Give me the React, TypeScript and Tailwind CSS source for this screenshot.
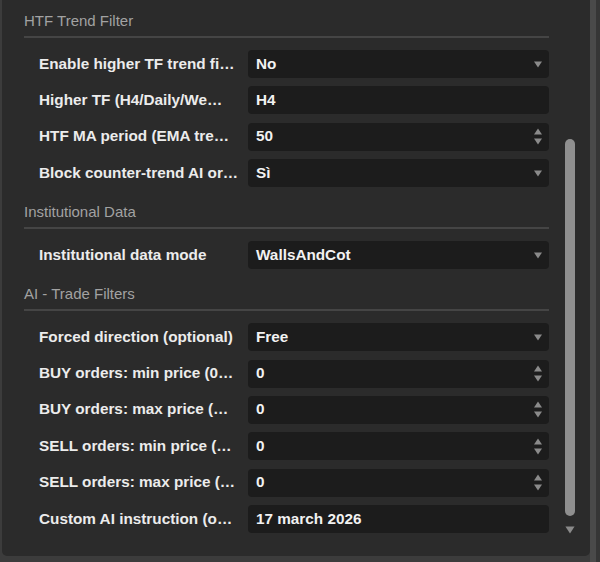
import React from "react";

type Row = { label: string; value: string; kind: "select" | "text" | "number" };
type Section = { title: string; rows: Row[] };

const sections: Section[] = [
  {
    title: "HTF Trend Filter",
    rows: [
      { label: "Enable higher TF trend fi…", value: "No", kind: "select" },
      { label: "Higher TF (H4/Daily/We…", value: "H4", kind: "text" },
      { label: "HTF MA period (EMA tre…", value: "50", kind: "number" },
      { label: "Block counter-trend AI or…", value: "Sì", kind: "select" },
    ],
  },
  {
    title: "Institutional Data",
    rows: [{ label: "Institutional data mode", value: "WallsAndCot", kind: "select" }],
  },
  {
    title: "AI - Trade Filters",
    rows: [
      { label: "Forced direction (optional)", value: "Free", kind: "select" },
      { label: "BUY orders: min price (0…", value: "0", kind: "number" },
      { label: "BUY orders: max price (…", value: "0", kind: "number" },
      { label: "SELL orders: min price (…", value: "0", kind: "number" },
      { label: "SELL orders: max price (…", value: "0", kind: "number" },
      { label: "Custom AI instruction (o…", value: "17 march 2026", kind: "text" },
    ],
  },
];

function DownArrow({ className = "" }: { className?: string }) {
  return (
    <svg width="8" height="7" viewBox="0 0 8 7" className={className}>
      <path d="M0 0.5 H8 L4 6.5 Z" fill="#8a8a8a" />
    </svg>
  );
}

function Spinner() {
  return (
    <div className="flex flex-col items-center gap-[3px]">
      <svg width="8" height="7" viewBox="0 0 8 7">
        <path d="M0 6.5 H8 L4 0.5 Z" fill="#8a8a8a" />
      </svg>
      <svg width="8" height="7" viewBox="0 0 8 7">
        <path d="M0 0.5 H8 L4 6.5 Z" fill="#8a8a8a" />
      </svg>
    </div>
  );
}

function Field({ row }: { row: Row }) {
  return (
    <div className="flex h-[28px] items-center">
      <div className="w-[224px] whitespace-nowrap pl-[15px] text-[15.3px] font-bold text-[#ececec]">
        {row.label}
      </div>
      <div className="flex h-[28px] w-[301px] items-center justify-between rounded-[4px] bg-[#1c1c1c] pl-[8px] pr-[7px]">
        <span className="text-[15.3px] font-bold text-[#f2f2f2]">{row.value}</span>
        {row.kind === "select" && <DownArrow />}
        {row.kind === "number" && <Spinner />}
      </div>
    </div>
  );
}

export default function App() {
  return (
    <div
      className="flex h-[562px] w-[600px] bg-[#3c3c3c]"
      style={{ fontFamily: '"Liberation Sans", Arial, sans-serif' }}
    >
      <div className="ml-[2px] flex h-[556px] w-[588px] overflow-hidden rounded-b-[5px] bg-[#2b2b2b]">
        <div className="ml-[22px] flex w-[525px] flex-col pt-[11px]">
          {sections.map((s, i) => (
            <div key={s.title} className={i > 0 ? "mt-[15px]" : ""}>
              <div className="h-[20px] text-[15px] leading-[20px] text-[#a2a2a2]">{s.title}</div>
              <div className="mt-[5px] h-[2px] bg-[#454545]" />
              <div className="mt-[12px] flex flex-col gap-[8.4px]">
                {s.rows.map((r) => (
                  <Field key={r.label} row={r} />
                ))}
              </div>
            </div>
          ))}
        </div>
        <div className="ml-[16px] flex w-[10px] flex-col items-center pt-[139px]">
          <div className="h-[377px] w-[10px] rounded-full bg-[#8f8f8f]" />
          <DownArrow className="mt-[10px] h-[8px] w-[10px]" />
        </div>
      </div>
      <div className="h-full w-[6px] bg-[#4a4a4a]" />
      <div className="h-full flex-1 bg-[#363636]" />
    </div>
  );
}
